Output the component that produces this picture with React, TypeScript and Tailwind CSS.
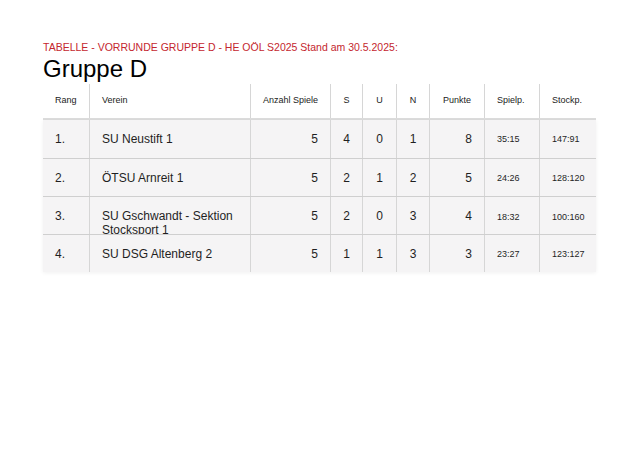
import React from 'react'

type Row = {
  rang: string
  verein: string
  spiele: number
  s: number
  u: number
  n: number
  punkte: number
  spielp: string
  stockp: string
}

const rows: Row[] = [
  { rang: '1.', verein: 'SU Neustift 1', spiele: 5, s: 4, u: 0, n: 1, punkte: 8, spielp: '35:15', stockp: '147:91' },
  { rang: '2.', verein: 'ÖTSU Arnreit 1', spiele: 5, s: 2, u: 1, n: 2, punkte: 5, spielp: '24:26', stockp: '128:120' },
  { rang: '3.', verein: 'SU Gschwandt - Sektion Stocksport 1', spiele: 5, s: 2, u: 0, n: 3, punkte: 4, spielp: '18:32', stockp: '100:160' },
  { rang: '4.', verein: 'SU DSG Altenberg 2', spiele: 5, s: 1, u: 1, n: 3, punkte: 3, spielp: '23:27', stockp: '123:127' },
]

const cols = 'grid grid-cols-[47px_161px_80px_32px_34px_33px_55px_55px_56px]'
const line = 'border-r border-[#d6d6d6]'

export default function App() {
  return (
    <div
      className="w-[640px] h-[452px] bg-white text-[#1f1f1f] pl-[43px] pt-[41px]"
      style={{ fontFamily: '"Liberation Sans", Arial, sans-serif' }}
    >
      <div className="text-[10.5px] leading-[13px] text-[#c4262e]">
        TABELLE - VORRUNDE GRUPPE D - HE OÖL S2025 Stand am 30.5.2025:
      </div>
      <h1 className="text-[24px] leading-[30px] text-black">Gruppe D</h1>

      <div className="w-[553px]">
        {/* header */}
        <div className={`${cols} h-[36px] text-[9px] text-[#222] border-b-2 border-[#dcdcdc]`}>
          <div className={`${line} flex items-center pl-3`}>Rang</div>
          <div className={`${line} flex items-center pl-3`}>Verein</div>
          <div className={`${line} flex items-center justify-center`}>Anzahl Spiele</div>
          <div className={`${line} flex items-center justify-center`}>S</div>
          <div className={`${line} flex items-center justify-center`}>U</div>
          <div className={`${line} flex items-center justify-center`}>N</div>
          <div className={`${line} flex items-center justify-center`}>Punkte</div>
          <div className={`${line} flex items-center pl-3`}>Spielp.</div>
          <div className="flex items-center pl-3">Stockp.</div>
        </div>

        {/* body */}
        <div className="shadow-[0_1px_4px_rgba(0,0,0,0.06)]">
          {rows.map((r, i) => (
            <div
              key={r.rang}
              className={`${cols} relative h-[38px] bg-[#f5f4f5] text-[12px] leading-[14px] ${
                i > 0 ? 'border-t border-[#cfcfcf]' : ''
              }`}
            >
              <div className={`${line} pl-3 pt-3`}>{r.rang}</div>
              <div className={`${line} pl-3 pr-2 pt-3`}>{r.verein}</div>
              <div className={`${line} pr-3 pt-3 text-right`}>{r.spiele}</div>
              <div className={`${line} pt-3 text-center`}>{r.s}</div>
              <div className={`${line} pt-3 text-center`}>{r.u}</div>
              <div className={`${line} pt-3 text-center`}>{r.n}</div>
              <div className={`${line} pr-3 pt-3 text-right`}>{r.punkte}</div>
              <div className={`${line} flex items-center pl-3 text-[9px]`}>{r.spielp}</div>
              <div className="flex items-center pl-3 text-[9px]">{r.stockp}</div>
            </div>
          ))}
        </div>
      </div>
    </div>
  )
}
